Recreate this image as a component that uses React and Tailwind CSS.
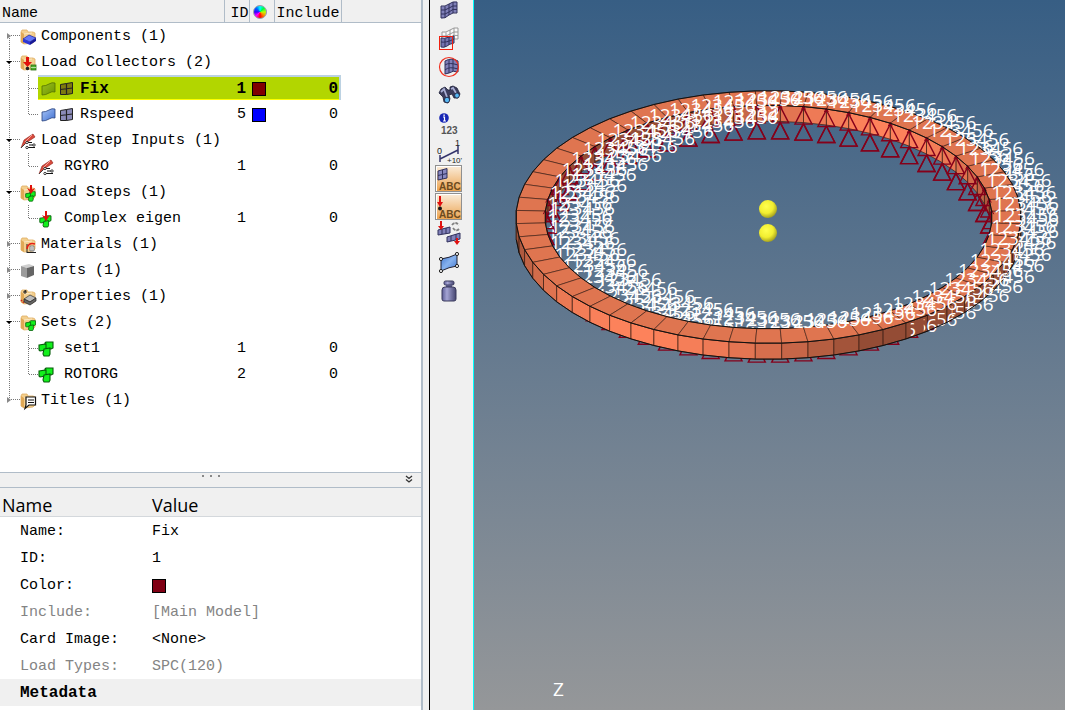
import React from "react";

/* ---------- small icons for the tree ---------- */

const Folder = () => (
  <>
    <path d="M1 3 L1 13 L4 15 L13 14 L15 12 L15 4 L13 3 L8 3 L7 1 L2 1 Z" fill="#f3cf8e" stroke="#dfae62" strokeWidth="0.8" />
    <path d="M1 3 L4 5 L4 15 L1 13 Z" fill="#e0a855" />
    <path d="M4 5 L12 4" stroke="#fbe7c2" />
  </>
);

const Cubes = ({ x = 0, y = 0, s = 1 }) => (
  <g transform={`translate(${x} ${y}) scale(${s})`} fill="#12f01c" stroke="#065c0a" strokeWidth="1.1">
    <path d="M7 2 L8 1 L15 1 L15 7 L13 8 L7 8 Z" />
    <path d="M1 4 L8 3 L8 9 L2 10 L1 9 Z" />
    <path d="M6 8 L12 7 L12 13 L11 15 L6 15 L5 13 Z" />
  </g>
);

const RedArrow = ({ x, y, h }) => (
  <g fill="#e0100c">
    <rect x={x - 1} y={y} width="2" height={h - 4} />
    <path d={`M${x - 4} ${y + h - 6} L${x} ${y + h - 4} L${x + 4} ${y + h - 6} L${x} ${y + h} Z`} />
  </g>
);

const StepInput = () => (
  <>
    <path d="M13 1 L15 4 L6 10 L1 15 L4 7 Z" fill="#d84a3c" stroke="#8f2018" strokeWidth="0.6" />
    <path d="M12 2 L5 9" stroke="#f5a59b" />
    <path d="M1 15 L5 11" stroke="#444" />
    <path d="M7 9.5 H12 M9 12 H15 M6 14.5 H15" stroke="#111" strokeWidth="1" />
    <circle cx="7" cy="9.5" r="1.2" fill="#fff" stroke="#111" strokeWidth="0.8" />
    <circle cx="14" cy="12" r="1.2" fill="#fff" stroke="#111" strokeWidth="0.8" />
    <circle cx="7" cy="14.5" r="1.2" fill="#fff" stroke="#111" strokeWidth="0.8" />
  </>
);

const TREE_ICONS = {
  components: (
    <>
      <Folder />
      <path d="M3 10 L9 6 L16 9 L10 13 Z" fill="#6478f8" stroke="#1a1f9a" strokeWidth="0.7" />
      <path d="M3 10 L10 13 L10 16 L3 13 Z" fill="#2c35d8" />
      <path d="M10 13 L16 9 L16 12 L10 16 Z" fill="#15199a" />
    </>
  ),
  collectors: (
    <>
      <Folder />
      <rect x="6" y="2" width="3" height="6" fill="#e0100c" />
      <path d="M3 7 H12 L7.500 12 Z" fill="#e0100c" />
      <circle cx="7.500" cy="13.500" r="1.800" fill="#222" />
      <rect x="11" y="10" width="5" height="5" fill="#4fae2c" stroke="#2a6e12" strokeWidth="0.8" />
      <path d="M11 12.500 H16" stroke="#c9f0b8" strokeWidth="0.8" />
    </>
  ),
  input: <StepInput />,
  steps: (
    <>
      <Folder />
      <Cubes x={5} y={6} s={0.68} />
      <RedArrow x={11} y={0} h={9} />
    </>
  ),
  step: (
    <>
      <Cubes x={1} y={4} s={0.8} />
      <RedArrow x={8} y={0} h={10} />
    </>
  ),
  materials: (
    <>
      <Folder />
      <path d="M7 16 V7 M7 15.500 H16" stroke="#222" fill="none" />
      <path d="M7 12 Q8 5 15 7" stroke="#e62015" strokeWidth="1.500" fill="none" />
      <path d="M10 9 H14 V14 H10 Z" fill="#eee" stroke="#666" strokeWidth="0.8" />
      <path d="M11 11 H13 M11 13 H13" stroke="#666" strokeWidth="0.7" />
    </>
  ),
  parts: (
    <>
      <path d="M1 3 L9 1 L14 3 L7 5 Z" fill="#cfcfcf" />
      <path d="M1 3 L7 5 L7 15 L1 13 Z" fill="#9b9b9b" />
      <path d="M7 5 L14 3 L14 12 L7 15 Z" fill="#656565" />
    </>
  ),
  properties: (
    <>
      <Folder />
      <path d="M5 3 L6 1 M3 3 H7 M5 1 V5" stroke="#222" />
      <path d="M1 11 L4 14" stroke="#c22" strokeWidth="1.500" strokeDasharray="1.500 1" />
      <path d="M4 10 L10 6 L16 9 L10 13 Z" fill="#bbb" stroke="#333" strokeWidth="0.7" />
      <path d="M4 10 L10 13 L16 9 V12 L10 16 L4 13 Z" fill="#666" stroke="#222" strokeWidth="0.7" />
    </>
  ),
  sets: (
    <>
      <Folder />
      <Cubes x={5} y={5} s={0.7} />
    </>
  ),
  set: <Cubes />,
  titles: (
    <>
      <Folder />
      <path d="M6 4 H15.500 V12 H9 L5 15.500 L6 12 Z" fill="#fff" stroke="#111" strokeWidth="1.200" />
      <path d="M8 7 H14 M8 9.500 H14" stroke="#111" />
    </>
  ),
};

const TreeIcon = ({ name }) => (
  <svg viewBox="0 0 16 16" className="h-4 w-4 shrink-0 overflow-visible" aria-hidden="true">
    {TREE_ICONS[name]}
  </svg>
);

const SheetPair = ({ sheet, mesh }) => (
  <svg viewBox="0 0 34 16" className="h-4 w-[34px] shrink-0" aria-hidden="true">
    <defs>
      <linearGradient id={`sheet-${sheet}`} x1="0" y1="0" x2="1" y2="1">
        <stop offset="0" stopColor={sheet === "blue" ? "#a9c6f8" : "#9cc020"} />
        <stop offset="1" stopColor={sheet === "blue" ? "#3f6fd0" : "#6c9400"} />
      </linearGradient>
    </defs>
    <path d="M1 5 Q5 5 8 3 Q11 1 14 2 L14 11 Q11 10 8 12 Q5 14 1 14 Z" fill={`url(#sheet-${sheet})`} stroke={sheet === "blue" ? "#26407c" : "#527000"} strokeWidth="0.8" />
    <path d="M19.500 3.500 L25.500 2.500 L31.500 1.500 V12.500 L25.500 13.500 L19.500 13.500 Z" fill={mesh} stroke="#222" />
    <path d="M25.500 2.500 V13.500 M19.500 8.500 L31.500 7" fill="none" stroke="#222" strokeWidth="1.200" />
  </svg>
);

/* ---------- model browser ---------- */

const ROWS = [
  { label: "Components (1)", icon: "components", open: false, first: true },
  { label: "Load Collectors (2)", icon: "collectors", open: true },
  { label: "Fix", pair: "green", id: 1, color: "dark", inc: 0, selected: true },
  { label: "Rspeed", pair: "blue", id: 5, color: "blue", inc: 0, end: true },
  { label: "Load Step Inputs (1)", icon: "input", open: true },
  { label: "RGYRO", icon: "input", id: 1, inc: 0, child: true, end: true },
  { label: "Load Steps (1)", icon: "steps", open: true },
  { label: "Complex eigen", icon: "step", id: 1, inc: 0, child: true, end: true },
  { label: "Materials (1)", icon: "materials", open: false },
  { label: "Parts (1)", icon: "parts", open: false },
  { label: "Properties (1)", icon: "properties", open: false },
  { label: "Sets (2)", icon: "sets", open: true },
  { label: "set1", icon: "set", id: 1, inc: 0, child: true },
  { label: "ROTORG", icon: "set", id: 2, inc: 0, child: true, end: true },
  { label: "Titles (1)", icon: "titles", open: false, last: true },
];

const Branch = ({ row }) => {
  const top = row.pair === undefined && !row.child;
  if (!top) {
    return (
      <svg viewBox="0 0 38 26" className="h-[26px] w-[38px] shrink-0" aria-hidden="true">
        <path d="M9.5 0 V26" stroke="#777" strokeDasharray="1 1" />
        <path d={row.end ? "M28.5 0 V13" : "M28.5 0 V26"} stroke="#777" strokeDasharray="1 1" />
        <path d="M29 13.5 H38" stroke="#777" strokeDasharray="1 1" />
      </svg>
    );
  }
  return (
    <button type="button" aria-label={`${row.open ? "Collapse" : "Expand"} ${row.label}`} className="shrink-0">
      <svg viewBox="0 0 20 26" className="block h-[26px] w-5" aria-hidden="true">
        <path d={row.first ? "M9.5 13 V26" : row.last ? "M9.5 0 V13" : "M9.5 0 V26"} stroke="#777" strokeDasharray="1 1" />
        <path d="M11 12.5 H20" stroke="#777" strokeDasharray="1 1" />
        {row.open ? <path d="M6 12 H12 L9 15 Z" fill="#000" /> : <path d="M7 10 L11 13 L7 16 Z" fill="#888" />}
      </svg>
    </button>
  );
};

const Swatch = ({ color }) => (
  <span className={`block h-3.5 w-3.5 border border-black ${color === "blue" ? "bg-[#0000ff]" : "bg-[#800000]"}`} />
);

const ModelTree = () => (
  <table className="w-full table-fixed border-collapse">
    <colgroup>
      <col className="w-[224px]" />
      <col className="w-[25px]" />
      <col className="w-[25px]" />
      <col className="w-[67px]" />
      <col />
    </colgroup>
    <thead>
      <tr className="h-[23px] bg-[#f0f0f0] text-left shadow-[inset_0_-1px_0_#b0bcc8]">
        <th className="border-r border-[#b0bcc8] p-0 pl-0.5 pt-1 font-normal leading-4">Name</th>
        <th className="border-r border-[#b0bcc8] p-0 pt-1 text-right font-normal leading-4">ID</th>
        <th className="border-r border-[#b0bcc8] p-0">
          <span role="img" aria-label="Color" className="ml-[3px] block h-3.5 w-3.5 rounded-full border border-gray-400 bg-[conic-gradient(#00ffff,#00ff40,#c0ff00,#ff8000,#ff0000,#ff00ff,#3000ff,#0060ff,#00ffff)]" />
        </th>
        <th className="border-r border-[#b0bcc8] p-0 pl-0.5 pt-1 font-normal leading-4">Include</th>
        <th className="p-0" aria-label="Filler" />
      </tr>
    </thead>
    <tbody>
      {ROWS.map((row) => {
        const hl = row.selected
          ? "border-t-2 border-t-[#bcd2e2] shadow-[inset_0_-1px_0_#ffff00] bg-[#b2d600] font-bold text-base h-[25px]"
          : "h-[26px] pt-0.5";
        return (
          <tr key={row.label} className="h-[26px]" aria-selected={row.selected}>
            <td className="p-0 align-top">
              <div className="flex h-[26px]">
                <Branch row={row} />
                <div className={`flex grow items-center ${hl} ${row.pair ? "pl-[3px]" : ""}`}>
                  {row.pair ? (
                    <SheetPair sheet={row.pair} mesh={row.pair === "blue" ? "#8a8ab8" : "#7d7a10"} />
                  ) : (
                    <TreeIcon name={row.icon} />
                  )}
                  <span className={`whitespace-nowrap ${row.child ? "pl-[10px]" : "pl-[5px]"}`}>{row.label}</span>
                </div>
              </div>
            </td>
            <td className="p-0 align-top">
              <div className={`flex items-center justify-end pr-[3px] ${hl}`}>{row.id}</div>
            </td>
            <td className="p-0 align-top">
              <div className={`flex items-center pl-[3px] ${hl}`}>{row.color && <Swatch color={row.color} />}</div>
            </td>
            <td className="p-0 align-top">
              <div className={`flex items-center justify-end ${hl} ${row.selected ? "border-r-2 border-r-[#bcd2e2] pr-px" : "pr-[3px]"}`}>{row.inc}</div>
            </td>
            <td className="p-0" />
          </tr>
        );
      })}
    </tbody>
  </table>
);

/* ---------- entity editor ---------- */

const PROPS = [
  ["Name:", "Fix", false],
  ["ID:", "1", false],
  ["Color:", <span key="c" role="img" aria-label="Dark red" className="block h-3.5 w-3.5 border border-black bg-[#800014]" />, false],
  ["Include:", "[Main Model]", true],
  ["Card Image:", "<None>", false],
  ["Load Types:", "SPC(120)", true],
];

const EntityEditor = () => (
  <table className="w-full table-fixed border-collapse">
    <colgroup>
      <col className="w-[152px]" />
      <col />
    </colgroup>
    <thead>
      <tr className="h-[29px] bg-[#f0f0f0] text-left font-['Open_Sans','Noto_Sans',sans-serif] text-lg leading-6 shadow-[inset_0_-1px_0_#d4d8dc]">
        <th className="p-0 pl-0.5 pt-1 font-normal">Name</th>
        <th className="p-0 pt-1 font-normal">Value</th>
      </tr>
    </thead>
    <tbody>
      {PROPS.map(([name, value, dim]) => (
        <tr key={name} className={`h-[27px] ${dim ? "text-[#848484]" : ""}`}>
          <th className="p-0 pl-5 pt-0.5 text-left font-normal">{name}</th>
          <td className="p-0 pt-0.5">{value}</td>
        </tr>
      ))}
      <tr className="h-[27px] bg-[#f0f0f0]">
        <th colSpan={2} className="p-0 pl-5 text-left text-base leading-5 font-bold">Metadata</th>
      </tr>
    </tbody>
  </table>
);

/* ---------- toolbar ---------- */

const Mesh = ({ x = 0, y = 0, fill = "#8080b8", stroke = "#30305c" }) => (
  <g transform={`translate(${x} ${y})`} fill="none" stroke={stroke} strokeWidth="1">
    <path d="M6 9 Q10 10 14 7 Q18 4 22 5 V16 Q18 15 14 18 Q10 22 6 21 Z" fill={fill} />
    <path d="M6 13 Q10 14 14 11 Q18 8 22 9 M6 17 Q10 18 14 15 Q18 11 22 12.500 M10 9.500 V21 M14 7 V18 M18 5 V16" />
  </g>
);

const Abc = ({ children }) => (
  <>
    <rect x="0.5" y="0.5" width="26" height="26" fill="url(#abc-fill)" stroke="#909090" />
    <path d="M1.500 26 V1.500 H26" stroke="#fff" fill="none" />
    {children}
    <text x="4" y="25" fontSize="10" fontWeight="700" fill="#6b4a20" fontFamily="Liberation Sans, sans-serif">ABC</text>
  </>
);

const TOOLS = [
  ["Elements", <Mesh key="i" />],
  [
    "Select by window",
    <g key="i">
      <Mesh x={1} y={-2} fill="#fafafa" stroke="#999" />
      <path d="M6 13 Q10 14 14 12 L19 11 V18 Q14 19 12 21 Q9 23 6 22 Z" fill="#7474b0" stroke="#30305c" />
      <path d="M6 17 Q11 18 19 14 M10 14 V22 M14 12 V20" stroke="#30305c" fill="none" />
      <rect x="4.5" y="11.500" width="13" height="13" fill="none" stroke="#f02010" />
    </g>,
  ],
  [
    "Select by circle",
    <g key="i">
      <path d="M10 8 Q13 6 18 6 L23 8 V19 Q18 17 14 20 L10 21 Z" fill="#8080b8" stroke="#30305c" />
      <path d="M10 12 Q14 9 23 12 M10 17 Q14 13 23 16 M14 7 V20 M18 6 V18" stroke="#30305c" fill="none" />
      <circle cx="14" cy="14" r="9.500" fill="none" stroke="#f03020" strokeWidth="1.200" />
    </g>,
  ],
  [
    "Find",
    <g key="i">
      <path d="M4 12 L6 8 L10 6 L13 9 L15 9 L15 6 L18 5 L22 7 L25 13 L23 17 L19 17 L17 13 L14 14 L15 18 L13 22 L9 21 L8 16 Z" fill="#3b3c5c" stroke="#1d1e38" strokeWidth="0.8" />
      <path d="M6 11 L9 8 L12 16 M16 8 L18 7 L21 12" stroke="#a9aed4" strokeWidth="1.800" fill="none" />
      <ellipse cx="12" cy="19" rx="2.600" ry="2.800" fill="#58b8f4" stroke="#1d1e38" strokeWidth="0.8" />
      <ellipse cx="22" cy="14.500" rx="2.300" ry="2.600" fill="#58b8f4" stroke="#1d1e38" strokeWidth="0.8" />
    </g>,
  ],
  [
    "Numbers",
    <g key="i">
      <circle cx="9" cy="9" r="4.800" fill="#1826b4" />
      <path d="M8 8 H9.500 V12 M8 12 H11" stroke="#fff" strokeWidth="1.200" fill="none" />
      <rect x="8.400" y="5.500" width="1.400" height="1.400" fill="#fff" />
      <text x="6" y="25" fontSize="10" fontWeight="700" fill="#555" fontFamily="Liberation Sans, sans-serif">123</text>
    </g>,
  ],
  [
    "Scale",
    <g key="i" fontFamily="Liberation Sans, sans-serif" fontSize="9" fill="#222">
      <text x="2" y="17">0</text>
      <text x="20" y="9">1</text>
      <text x="12" y="26" fontSize="8">+10'</text>
      <path d="M5 22 L23 13 M5 18 V25 M23 9 V17" stroke="#34346c" strokeWidth="1.500" fill="none" />
    </g>,
  ],
  [
    "Element labels",
    <Abc key="i">
      <path d="M3 6 L12 3.500 V13 L3 15 Z" fill="#8888c0" stroke="#30305c" />
      <path d="M7.500 5 V14 M3 10.500 L12 8.500" stroke="#30305c" />
    </Abc>,
  ],
  [
    "Load labels",
    <Abc key="i">
      <path d="M4 3 H6 V9 H8 L5 14 L2 9 H4 Z" fill="#e01010" />
      <circle cx="5" cy="15.500" r="2" fill="#181818" />
    </Abc>,
  ],
  [
    "Swap loads",
    <g key="i">
      <path d="M3 9 L15 6 V12 L3 14 Z M12 16 L25 12 V18 L12 21 Z" fill="#8080b8" stroke="#30305c" />
      <path d="M7 8 V13 M11 7 V13 M16 15 V20 M21 13 V19" stroke="#30305c" />
      <path d="M5 0 H7 V5 H9 L6 9 L3 5 H5 Z M21 17 H23 V20 H25 L22 24 L19 20 H21 Z" fill="#e01010" />
      <path d="M17 4 Q20 0 24 4 M24 8 Q21 11 18 7" stroke="#808080" strokeWidth="1.800" fill="none" strokeDasharray="3 1" />
    </g>,
  ],
  [
    "Surface",
    <g key="i">
      <path d="M6 10 Q14 9 22 5 V17 Q14 18 6 22 Z" fill="url(#surf-fill)" stroke="#223" />
      <g fill="#eee" stroke="#222">
        <circle cx="6" cy="10" r="1.600" />
        <circle cx="22" cy="5" r="1.600" />
        <circle cx="22" cy="17" r="1.600" />
        <circle cx="6" cy="22" r="1.600" />
      </g>
    </g>,
  ],
  [
    "Mass",
    <g key="i">
      <rect x="9" y="4" width="10" height="4" rx="1.500" fill="url(#mass-fill)" stroke="#3a3a5c" />
      <rect x="11" y="8" width="6" height="2" fill="#555584" />
      <path d="M10 10 H18 Q21 10 21 13 V22 Q21 24 19 24 H9 Q7 24 7 22 V13 Q7 10 10 10 Z" fill="url(#mass-fill)" stroke="#3a3a5c" />
    </g>,
  ],
];

const Toolbar = () => (
  <div role="toolbar" aria-label="Display" className="flex w-11 shrink-0 flex-col overflow-hidden border-l border-black bg-[#f0f0f0] pl-[5px]">
    <svg className="h-0 w-0 shrink-0" aria-hidden="true">
      <defs>
        <linearGradient id="abc-fill" x1="0" y1="0" x2="0" y2="1">
          <stop offset="0" stopColor="#fbeedd" />
          <stop offset="1" stopColor="#eba24e" />
        </linearGradient>
        <linearGradient id="surf-fill" x1="0" y1="0" x2="1" y2="1">
          <stop offset="0" stopColor="#3f74cc" />
          <stop offset="0.5" stopColor="#86b2ee" />
          <stop offset="1" stopColor="#3f74cc" />
        </linearGradient>
        <linearGradient id="mass-fill" x1="0" y1="0" x2="1" y2="0">
          <stop offset="0" stopColor="#5c5c94" />
          <stop offset="0.35" stopColor="#a4a4d4" />
          <stop offset="1" stopColor="#45456f" />
        </linearGradient>
      </defs>
    </svg>
    <div className="-mt-[3px] flex flex-col">
      {TOOLS.map(([name, art]) => (
        <button key={name} type="button" aria-label={name} className="h-7 w-7">
          <svg viewBox="0 0 28 28" className="block h-7 w-7" aria-hidden="true">
            {art}
          </svg>
        </button>
      ))}
    </div>
  </div>
);

/* ---------- 3D view of the ring ---------- */

const N = 60;
const CX = 768.5;
const CY = 217;
const OUT = [252.5, 126.3];
const INN = [223.5, 111.8];
const H = 16;

const rad = (deg) => (deg * Math.PI) / 180;
// Angle is measured from the front of the ring, positive to the right.
const at = (deg, [rx, ry], dy = 0) => [CX + rx * Math.sin(rad(deg)), CY + ry * Math.cos(rad(deg)) + dy];
const pts = (...list) => list.map((p) => p.map((v) => v.toFixed(1)).join(",")).join(" ");
const shade = (deg) => {
  const k = Math.min(1, Math.max(0.585, Math.cos(rad(deg + 32))));
  return `rgb(${Math.round(253 * k)},${Math.round(130 * k)},${Math.round(91 * k)})`;
};

const SEGS = Array.from({ length: N }, (_, i) => -177 + i * 6);
const isBack = (deg) => Math.cos(rad(deg)) < 0;
const isRight = (deg) => Math.sin(rad(deg)) > 0;

const Tri = ({ p: [x, y] }) => (
  <path d={`M${x} ${y + 1} L${x + 8.5} ${y + 17.500} H${x - 8.5} Z`} fill="none" stroke="#85001a" strokeWidth="1.400" />
);
const Dof = ({ p: [x, y], clip }) => (
  <text x={x + 2} y={y - 1} clipPath={clip}>123456</text>
);

const Viewport = () => {
  const lower = SEGS.map((a) => at(a, INN, H));
  const upper = SEGS.map((a) => at(a, INN));
  // Horizontal span in which a lower-layer label is not hidden by a wall.
  const limits = SEGS.map((a, i) => {
    const [x, y] = lower[i];
    if (isBack(a)) return { from: 474, to: Math.min(2 * CX - x, 778) };
    const c = Math.min(1, (y - CY - H) / OUT[1]);
    return { from: CX + OUT[0] * Math.sqrt(1 - c * c), to: 1065 };
  });
  return (
    <svg viewBox="474 0 591 710" preserveAspectRatio="xMidYMid slice" className="block h-full w-full" role="img" aria-label="Ring model with constraints">
      <defs>
        {limits.map((l, i) => (
          <clipPath key={i} id={`dof-${i}`}>
            <rect x={l.from} y="0" width={Math.max(0, l.to - l.from)} height="710" />
          </clipPath>
        ))}
        <radialGradient id="ball" cx="0.4" cy="0.35" r="0.65">
          <stop offset="0" stopColor="#ffff50" />
          <stop offset="0.6" stopColor="#f2ee30" />
          <stop offset="1" stopColor="#a8a420" />
        </radialGradient>
      </defs>

      <g fill="#fff" fontFamily="Open Sans, Noto Sans, sans-serif" fontSize="19">
        {lower.map((p, i) => <Tri key={i} p={p} />)}
        {SEGS.map((a, i) => isBack(a) === isRight(a) && <Dof key={i} p={lower[i]} />)}

        {SEGS.filter((a) => isBack(a + 3)).map((a) => (
          <polygon key={a} points={pts(at(a, INN), at(a + 6, INN), at(a + 6, INN, H), at(a, INN, H))} fill={shade(a + 3 + 180)} stroke="#3a1c12" strokeWidth="0.7" />
        ))}
        {SEGS.map((a, i) => isBack(a) && <Tri key={i} p={upper[i]} />)}
        {SEGS.map((a, i) => isBack(a) && <Tri key={i} p={lower[i]} />)}
        {SEGS.map((a, i) => isBack(a) && !isRight(a) && <Dof key={i} p={lower[i]} clip={`url(#dof-${i})`} />)}

        {SEGS.filter((a) => !isBack(a + 3)).map((a) => (
          <polygon key={a} points={pts(at(a, OUT), at(a + 6, OUT), at(a + 6, OUT, H), at(a, OUT, H))} fill={shade(a + 3)} stroke="#3a1c12" strokeWidth="0.7" />
        ))}
        {SEGS.map((a, i) => !isBack(a) && isRight(a) && <Dof key={i} p={lower[i]} clip={`url(#dof-${i})`} />)}

        {SEGS.map((a) => (
          <polygon key={a} points={pts(at(a, OUT), at(a + 6, OUT), at(a + 6, INN), at(a, INN))} fill="#df7550" stroke="#3a1c12" strokeWidth="0.6" />
        ))}
        {SEGS.filter((a) => isBack(a)).map((a) => {
          const [x, y] = at(a, INN);
          return <path key={a} d={`M${x - 2} ${y + 3} L${x} ${y - 1} L${x + 2} ${y + 3}`} stroke="#85001a" fill="none" />;
        })}
        <g fill="none" stroke="#111">
          <polygon points={pts(...SEGS.map((a) => at(a, OUT)))} />
          <polygon points={pts(...SEGS.map((a) => at(a, INN)))} />
          <polyline points={pts(...SEGS.filter((a) => !isBack(a)).map((a) => at(a, OUT, H)))} />
        </g>
        {upper.map((p, i) => <Dof key={i} p={p} />)}

        <circle cx="768" cy="209" r="9" fill="url(#ball)" />
        <circle cx="768" cy="233" r="9" fill="url(#ball)" />
        <text x="553" y="696">Z</text>
      </g>
    </svg>
  );
};

export default function App() {
  return (
    <div className="flex h-screen min-h-[640px] w-full overflow-hidden bg-[#f0f0f0] font-['Liberation_Mono',monospace] text-[15px] leading-5 text-black">
      <aside className="mr-1.5 flex w-[423px] shrink-0 flex-col border-r-2 border-[#b0bcc8] bg-white">
        <section aria-label="Model browser" className="min-h-0 flex-1 overflow-hidden">
          <ModelTree />
        </section>
        <div className="flex h-4 shrink-0 items-start border-y border-[#b0bcc8] bg-[#f0f0f0]">
          <div className="flex flex-1 justify-center gap-1.5 pt-0.5" aria-hidden="true">
            <span className="h-0.5 w-0.5 bg-[#888]" />
            <span className="h-0.5 w-0.5 bg-[#888]" />
            <span className="h-0.5 w-0.5 bg-[#888]" />
          </div>
          <button type="button" aria-label="Collapse editor" className="-ml-4 mr-2 mt-0.5">
            <svg viewBox="0 0 8 8" className="block h-2 w-2">
              <path d="M1 1 L4 3.500 L7 1 M1 4.500 L4 7 L7 4.500" fill="none" stroke="#333" strokeWidth="1.300" />
            </svg>
          </button>
        </div>
        <section aria-label="Entity editor" className="shrink-0 pb-1">
          <EntityEditor />
        </section>
      </aside>
      <Toolbar />
      <main className="min-w-0 flex-1 border-l border-[#00ffff] bg-linear-to-b from-[#375e84] to-[#959799]">
        <Viewport />
      </main>
    </div>
  );
}
